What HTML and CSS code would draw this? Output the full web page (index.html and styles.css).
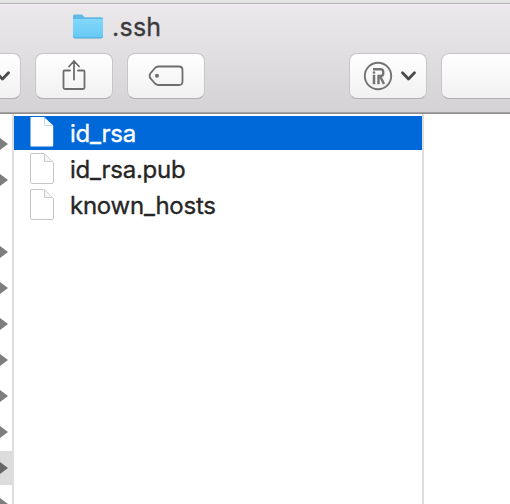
FILE: index.html
```html
<!DOCTYPE html>
<html lang="en">
<head>
<meta charset="utf-8">
<title>.ssh</title>
<link rel="stylesheet" href="styles.css">
</head>
<body>
<div class="window">
  <header class="chrome">
    <div class="title">
      <svg class="folder" width="32" height="26" viewBox="0 0 32 26">
        <defs><linearGradient id="fold" x1="0" y1="0" x2="0" y2="1"><stop offset="0" stop-color="#82d8fb"/><stop offset="1" stop-color="#66c8f5"/></linearGradient></defs>
        <path d="M1 2Q1 .5 2.500 .5H9.500Q10.500 .5 11.500 2L12.500 3.200H29.500Q31 3.200 31 5V12H1Z" fill="#60b9e2"/>
        <path d="M1 5H31V22.500Q31 24 29.500 24H2.500Q1 24 1 22.500Z" fill="url(#fold)"/>
        <path d="M1.500 23.300Q2 24 3 24H29Q30 24 30.500 23.300" fill="none" stroke="#4aa5d0"/>
      </svg>
      <span class="title-text">.ssh</span>
    </div>
    <div class="toolbar">
      <div class="button clipped">
        <svg width="20" height="44" viewBox="0 0 20 44"><path d="M-3.500 18.800L2.500 25L8.500 18.800" fill="none" stroke="#4b4b4b" stroke-width="2.800" stroke-linecap="round" stroke-linejoin="round"/></svg>
      </div>
      <div class="button share">
        <svg width="76" height="44" viewBox="0 0 76 44" fill="none" stroke="#6d6d6d" stroke-width="1.800" stroke-linecap="round" stroke-linejoin="round"><path d="M34 16.500H28.500Q27.500 16.500 27.500 17.500V33.500Q27.500 35 29 35H47Q48.500 35 48.500 33.500V17.500Q48.500 16.500 47.500 16.500H42M38 25.500V7M33 12.500L38 7L43 12.500"/></svg>
      </div>
      <div class="button tag">
        <svg width="76" height="44" viewBox="0 0 76 44"><path d="M30.500 12.500H51Q54.500 12.500 54.500 16V27.500Q54.500 31 51 31H30.500Q28.500 31 27 29.500L22.500 24.400Q20.700 21.800 22.500 19.200L27 14Q28.500 12.500 30.500 12.500Z" fill="none" stroke="#6d6d6d" stroke-width="1.800"/><circle cx="29" cy="21.800" r="2" fill="#6d6d6d"/></svg>
      </div>
      <div class="button action">
        <svg width="76" height="44" viewBox="0 0 76 44" fill="none"><circle cx="28" cy="22" r="13.200" stroke="#747474" stroke-width="1.900"/><path d="M23 15.200H30.500Q33.200 15.200 33.200 17.800V19.400Q33.200 22 30.500 22H28.500V30.200M30.300 22.600L34 30" stroke="#747474" stroke-width="2.400"/><path d="M24 20.800V30.200" stroke="#747474" stroke-width="2.500"/><circle cx="24" cy="18.500" r="1.300" fill="#747474"/><path d="M52.500 18.800L58.500 25L64.500 18.800" stroke="#4b4b4b" stroke-width="2.800" stroke-linecap="round" stroke-linejoin="round"/></svg>
      </div>
      <div class="button search"></div>
    </div>
  </header>
  <main class="columns">
    <div class="parents">
      <div class="parent"><i class="arrow"></i></div>
      <div class="parent"><i class="arrow"></i></div>
      <div class="parent"></div>
      <div class="parent"><i class="arrow"></i></div>
      <div class="parent"><i class="arrow"></i></div>
      <div class="parent"><i class="arrow"></i></div>
      <div class="parent"><i class="arrow"></i></div>
      <div class="parent"><i class="arrow"></i></div>
      <div class="parent"><i class="arrow"></i></div>
      <div class="parent current"><i class="arrow"></i></div>
      <div class="parent"><i class="arrow"></i></div>
    </div>
    <div class="files">
      <div class="file selected">
        <svg class="doc" width="24" height="32" viewBox="0 0 24 32"><path d="M.5 0H14L23.200 8.500V28.500Q23.200 29.500 22.200 29.500H.5Z" fill="#fff"/><path d="M14.500 .5V7.500Q14.500 8.500 15.500 8.500H22.500" fill="none" stroke="#c3d5ea"/></svg>
        <span class="name">id_rsa</span>
      </div>
      <div class="file">
        <svg class="doc" width="24" height="32" viewBox="0 0 24 32"><path d="M2 .5H13.500Q14.500 .5 15.500 1.500L22.500 8.500Q23.500 9.500 23.500 11V29Q23.500 30.500 22 30.500H2Q.5 30.500 .5 29V2Q.5 .5 2 .5Z" fill="#fff" stroke="#c6c6c6"/><path d="M14.500 1V8.500H22.500" fill="#f5f5f5" stroke="#cacaca"/></svg>
        <span class="name">id_rsa.pub</span>
      </div>
      <div class="file">
        <svg class="doc" width="24" height="32" viewBox="0 0 24 32"><path d="M2 .5H13.500Q14.500 .5 15.500 1.500L22.500 8.500Q23.500 9.500 23.500 11V29Q23.500 30.500 22 30.500H2Q.5 30.500 .5 29V2Q.5 .5 2 .5Z" fill="#fff" stroke="#c6c6c6"/><path d="M14.500 1V8.500H22.500" fill="#f5f5f5" stroke="#cacaca"/></svg>
        <span class="name">known_hosts</span>
      </div>
    </div>
    <div class="preview"></div>
  </main>
</div>
</body>
</html>
```

FILE: styles.css
```css
* { box-sizing: border-box; }
body { margin: 0; overflow: hidden; background: #fff; font-family: Inter, "Liberation Sans", sans-serif; }
svg { display: block; flex: none; }
.window { width: 510px; height: 504px; overflow: hidden; display: flex; flex-direction: column; }
.chrome {
  height: 114px;
  flex: none;
  padding-top: 4px;
  background: linear-gradient(#e5e5e5 0 3px, #b4b3b4 3px 4px, #f3f1f3 4px 5px, #ebe9eb 5px, #d4d2d4 112px, #a4a3a4 112px 113px, #8f8e8f 113px);
}
.title { height: 49px; display: flex; padding: 10px 0 0 72px; }
.title-text { margin-left: 8px; font-size: 25px; line-height: 27px; letter-spacing: .25px; color: #3c3a3c; -webkit-text-stroke: .3px; }
.toolbar { display: flex; height: 46px; }
.button {
  height: 46px;
  width: 78px;
  flex: none;
  border: 1px solid #c8c6c8;
  border-bottom-color: #b0aeb0;
  border-radius: 8px;
  background: linear-gradient(#fff, #f1f1f1);
  overflow: hidden;
}
.clipped { width: 21px; border-left: 0; border-radius: 0 8px 8px 0; }
.share { margin-left: 14px; }
.tag { margin-left: 14px; }
.action { margin-left: 144px; }
.search { margin-left: 14px; width: 90px; }
.columns { display: grid; grid-template-columns: 14px 410px 1fr; height: 390px; }
.parents { padding-top: 12px; border-right: 2px solid #dedede; overflow: hidden; }
.parent { height: 36px; display: flex; align-items: center; }
.current { background: linear-gradient(#dcdcdc, #dcdcdc) 0 1px / 100% 34px no-repeat; }
.arrow { width: 8px; height: 12px; background: #7e7e7e; clip-path: polygon(0 0, 100% 50%, 0 100%); }
.current .arrow { background: #666; }
.files { border-right: 2px solid #dedede; padding-top: 2px; }
.file { height: 34px; margin-bottom: 2px; padding-left: 16px; display: flex; align-items: center; color: #262626; }
.selected { background: #0069d9; color: #fff; }
.name { margin-left: 16px; padding-top: 2px; font-size: 24px; line-height: 32px; letter-spacing: -.25px; white-space: nowrap; -webkit-text-stroke: .35px; }
```
